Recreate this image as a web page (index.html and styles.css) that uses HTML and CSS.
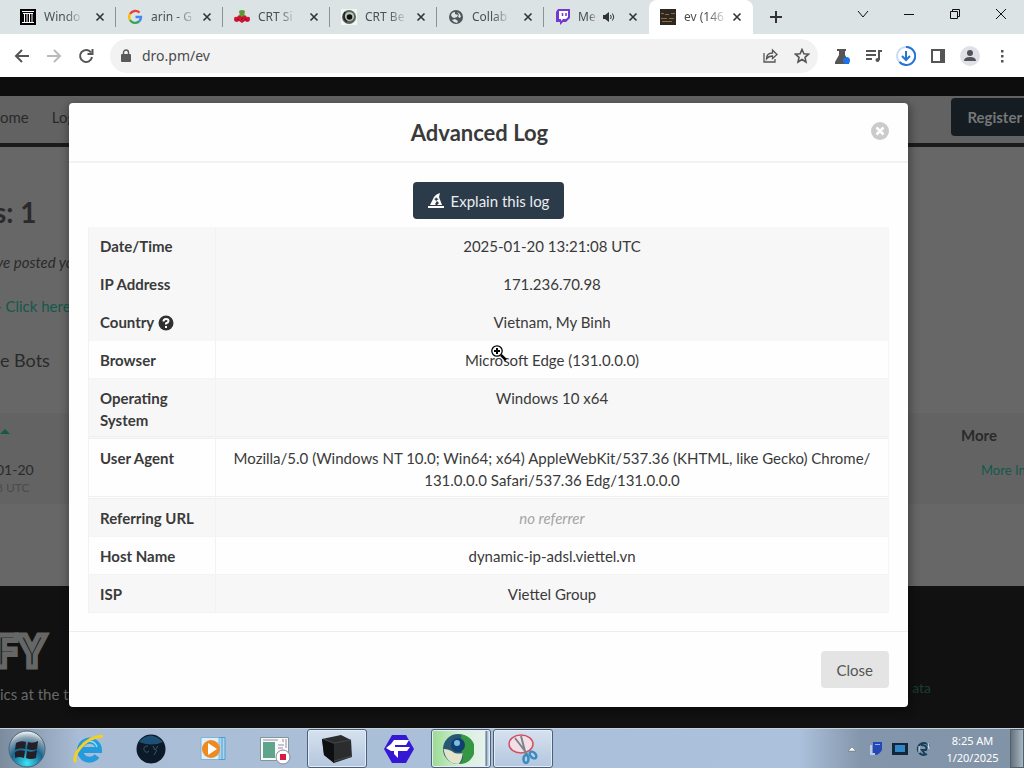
FILE: index.html
```html
<!DOCTYPE html>
<html lang="en">
<head>
<meta charset="utf-8">
<title>Advanced Log</title>
<link rel="stylesheet" href="styles.css">
</head>
<body>
<header class="tabbar">
  <div class="tab">
    <svg class="fav" viewBox="0 0 16 16"><path fill="#000" d="M0 0h16v16H0z"/><path stroke="#fff" d="M2 2.500h12M2 13.500h12M3 4.500h10M4.500 5v8M7 5v8M9.500 5v8M12 5v8"/></svg>
    <span class="tab-title"><span>Windo</span></span><button class="x" aria-label="Close tab"><svg viewBox="0 0 10 10"><path d="m1.500 1.500 7 7m0-7-7 7"/></svg></button>
  </div>
  <div class="tab">
    <svg class="fav" viewBox="0 0 16 16" fill="none" stroke-width="2.400"><path stroke="#e94235" d="M3 5a6 6 0 0 1 9.500-1.300"/><path stroke="#fbbc04" d="M3 11a6 6 0 0 1 0-6"/><path stroke="#34a853" d="M12 12.500A6 6 0 0 1 3 11"/><path stroke="#4285f4" d="M8.500 8H14a6 6 0 0 1-2 4.500"/></svg>
    <span class="tab-title"><span>arin - G</span></span><button class="x" aria-label="Close tab"><svg viewBox="0 0 10 10"><path d="m1.500 1.500 7 7m0-7-7 7"/></svg></button>
  </div>
  <div class="tab">
    <svg class="fav" viewBox="0 0 16 16"><path fill="#5b9b32" d="M5 2q3-2 6 0l-1 6H6z"/><path fill="#cf1236" d="M0 10q0-3 3-2l2-2 3 2 3-2 2 2q3-1 3 2t-3 3l-2-1-3 2-3-2-2 1q-3 0-3-3"/><path stroke="#711" d="m3 10 2 1m4-2-2 2m4-1 2 1"/></svg>
    <span class="tab-title"><span>CRT Si</span></span><button class="x" aria-label="Close tab"><svg viewBox="0 0 10 10"><path d="m1.500 1.500 7 7m0-7-7 7"/></svg></button>
  </div>
  <div class="tab">
    <svg class="fav" viewBox="0 0 16 16"><path fill="#f3f5f5" d="M0 0h16v16H0z"/><circle cx="8" cy="8" r="7" fill="#59635c"/><circle cx="8.500" cy="7.500" r="4.600" fill="#b8c5ba"/><circle cx="8.500" cy="8" r="2.800" fill="#111"/><path fill="none" stroke="#222" stroke-width="1.500" d="M4 3Q1 9 6 13"/></svg>
    <span class="tab-title"><span>CRT Be</span></span><button class="x" aria-label="Close tab"><svg viewBox="0 0 10 10"><path d="m1.500 1.500 7 7m0-7-7 7"/></svg></button>
  </div>
  <div class="tab">
    <svg class="fav" viewBox="0 0 16 16"><circle cx="8" cy="8" r="7" fill="#50575c"/><path fill="#dde3e5" d="M3 6q1-3 4-3v2l3 1-1 2-3 1-2-1zM9 3l3 2 1 3-2 1-1-2 1-1zM4 11l3-1 3 2-1 2q-3 0-5-3"/></svg>
    <span class="tab-title"><span>Collab</span></span><button class="x" aria-label="Close tab"><svg viewBox="0 0 10 10"><path d="m1.500 1.500 7 7m0-7-7 7"/></svg></button>
  </div>
  <div class="tab tab-last">
    <svg class="fav" viewBox="0 0 16 16"><path fill="#7139d4" d="M3 0h12v9l-4 4H8l-3 3v-3H1V3z"/><path fill="#fff" d="M4 2h9v6l-2 2H8l-2 2v-2H4z"/><path stroke="#7139d4" stroke-width="1.500" d="M7.500 4v3M11 4v3"/></svg>
    <span class="tab-title"><span>Me</span></span>
    <svg class="sound" viewBox="0 0 12 12"><path fill="#333" d="M0 4h2l4-3v10L2 8H0z"/><path fill="none" stroke="#333" d="M7.500 4q1.500 2 0 4M9.500 2.500q2.500 3.500 0 7"/></svg>
    <button class="x" aria-label="Close tab"><svg viewBox="0 0 10 10"><path d="m1.500 1.500 7 7m0-7-7 7"/></svg></button>
  </div>
  <div class="tab tab-active">
    <svg class="fav" viewBox="0 0 16 16"><path fill="#2f2820" d="M0 0h16v16H0z"/><path stroke="#8a6d3c" d="M1 4.500h3m1 1h4m2-1h4M1 9.500h6m2 0h5M2 12.500h10"/></svg>
    <span class="tab-title"><span>ev (146</span></span><button class="x" aria-label="Close tab"><svg viewBox="0 0 10 10"><path d="m1.500 1.500 7 7m0-7-7 7"/></svg></button>
  </div>
  <button class="newtab" aria-label="New tab"><svg viewBox="0 0 14 14"><path d="M7 1v12M1 7h12"/></svg></button>
  <div class="winctl">
    <button aria-label="Search tabs"><svg viewBox="0 0 12 12"><path d="m1 3 5 6 5-6"/></svg></button>
    <button aria-label="Minimize"><svg viewBox="0 0 12 12"><path d="M1 6.500h10"/></svg></button>
    <button aria-label="Restore"><svg viewBox="0 0 12 12"><path d="M1.500 3.500h7v7h-7zM3.500 3V1.500h7v7H9"/></svg></button>
    <button aria-label="Close"><svg viewBox="0 0 12 12"><path d="m1 1 10 10M11 1 1 11"/></svg></button>
  </div>
</header>

<nav class="toolbar" aria-label="Browser">
  <button class="tool" aria-label="Back"><svg viewBox="0 0 16 16"><path d="M15 8H2m6-6L2 8l6 6"/></svg></button>
  <button class="tool tool-off" aria-label="Forward"><svg viewBox="0 0 16 16"><path d="M1 8h13M8 2l6 6-6 6"/></svg></button>
  <button class="tool" aria-label="Reload"><svg viewBox="0 0 16 16"><path d="M13 4.500A6 6 0 1 0 14 9M14.500 1v5h-5"/></svg></button>
  <div class="omnibox">
    <svg class="lock" viewBox="0 0 10 14"><path fill="#5a5a5a" d="M1 5h8q1 0 1 1v6q0 1-1 1H1q-1 0-1-1V6q0-1 1-1"/><path fill="none" stroke="#5a5a5a" stroke-width="1.400" d="M2.500 5V3.500a2.500 2.500 0 0 1 5 0V5"/></svg>
    <input class="url" aria-label="Address" value="dro.pm/ev">
    <button class="tool thin" aria-label="Share"><svg viewBox="0 0 16 16"><path d="M2 5v9h11v-3M4.500 11q0-6 6-6V2l4.500 4.500-4.500 4V8q-4 0-6 3z"/></svg></button>
    <button class="tool thin star" aria-label="Bookmark"><svg viewBox="0 0 16 16"><path d="m8 1.500 1.900 4.300 4.600.4-3.500 3.100 1 4.700L8 11.500 4 14l1-4.700-3.500-3.100 4.600-.4z"/></svg></button>
  </div>
  <button class="tool" aria-label="Experiments"><svg viewBox="0 0 16 16"><path fill="#555" stroke="none" d="M3 1h9v2h-1v4l4 7v2H1v-2l4-7V3H3z"/><circle cx="12.500" cy="12.500" r="3.500" fill="#1a73e8" stroke="none"/></svg></button>
  <button class="tool" aria-label="Media controls"><svg viewBox="0 0 16 16"><path d="M0 3h10M0 7h10M0 11h6M13 12V3h3"/><circle cx="11.500" cy="12" r="2" fill="#555" stroke="none"/></svg></button>
  <button class="tool big" aria-label="Downloads"><svg viewBox="0 0 20 20"><circle cx="10" cy="10" r="9" stroke="#c6dcf5"/><path stroke="#2672d8" d="M10 1a9 9 0 1 1-6.500 15M10 5v9m-4-4 4 4 4-4"/></svg></button>
  <button class="tool" aria-label="Side panel"><svg viewBox="0 0 16 16"><path d="M2 2h12v12H2z"/><path fill="#555" stroke="none" d="M10 2h4v12h-4z"/></svg></button>
  <button class="tool big" aria-label="Profile"><svg viewBox="0 0 20 20"><circle cx="10" cy="10" r="10" fill="#dfe1e6" stroke="none"/><path fill="#50545a" stroke="none" d="M10 4a3 3 0 1 1 0 6 3 3 0 0 1 0-6m-6 11q0-4 6-4t6 4z"/></svg></button>
  <button class="tool" aria-label="Menu"><svg viewBox="0 0 16 16"><path fill="#555" stroke="none" d="M7 2h2.500v2.500H7zm0 5h2.500v2.500H7zm0 5h2.500v2.500H7z"/></svg></button>
</nav>

<main class="viewport">
  <div class="site">
    <div class="site-strip"></div>
    <nav class="site-nav" aria-label="Site">
      <a href="#">ome</a><a href="#">Log</a><a href="#" class="register">Register</a>
    </nav>
    <div class="site-body">
      <h1>s: 1</h1>
      <p class="posted">ve posted yo</p>
      <p class="click">- <a href="#">Click here</a></p>
      <p class="bots">e Bots</p>
      <div class="hits">
        <div class="hit-date"><span class="sort"></span><span class="date">01-20</span><span class="utc">8 UTC</span></div>
        <div class="hit-more"><b>More</b><a href="#">More In</a></div>
      </div>
    </div>
    <footer class="site-foot">
      <div class="brand"><span class="logo">FY</span><span>ics at the t</span></div>
      <a href="#">ata</a>
    </footer>
  </div>

  <div class="shade">
    <section class="dialog" role="dialog" aria-labelledby="dialog-title">
      <header class="dialog-head">
        <h2 id="dialog-title">Advanced Log</h2>
        <button class="dismiss" aria-label="Dismiss"><svg viewBox="0 0 18 18"><circle cx="9" cy="9" r="9" fill="#cbcbcb"/><path stroke="#fff" stroke-width="2.500" d="m5.500 5.500 7 7m0-7-7 7"/></svg></button>
      </header>
      <div class="dialog-body">
        <button class="explain"><svg viewBox="0 0 16 16"><path fill="#fff" d="M0 13h16v2H0zM2 12 6 4q2-3 6-4l-1 4 3 8H9l2-2-2-2-2 3 1 1z"/><path fill="#2c3b49" d="m8 4 1 1.500L11 6 9 7 8 8.500 7.500 7 6 6l1.500-.5z"/></svg>Explain this log</button>
        <table class="log">
          <tr class="alt soft"><th scope="row">Date/Time</th><td>2025-01-20 13:21:08 UTC</td></tr>
          <tr class="alt soft"><th scope="row">IP Address</th><td>171.236.70.98</td></tr>
          <tr class="alt soft"><th scope="row">Country <svg class="help" viewBox="0 0 16 16"><circle cx="8" cy="8" r="7.500" fill="#303030"/><path fill="none" stroke="#fff" stroke-width="2" d="M5.500 6.500q0-2.500 2.500-2.500t2.500 2Q10.500 7.500 8 8.500v1M8 11v2"/></svg></th><td>Vietnam, My Binh</td></tr>
          <tr><th scope="row">Browser</th><td>Microsoft Edge (131.0.0.0)</td></tr>
          <tr class="alt ruled"><th scope="row">Operating System</th><td>Windows 10 x64</td></tr>
          <tr class="ruled"><th scope="row">User Agent</th><td>Mozilla/5.0 (Windows NT 10.0; Win64; x64) AppleWebKit/537.36 (KHTML, like Gecko) Chrome/<wbr>131.0.0.0 Safari/537.36 Edg/131.0.0.0</td></tr>
          <tr class="alt"><th scope="row">Referring URL</th><td class="none">no referrer</td></tr>
          <tr><th scope="row">Host Name</th><td>dynamic-ip-adsl.viettel.vn</td></tr>
          <tr class="alt"><th scope="row">ISP</th><td>Viettel Group</td></tr>
        </table>
      </div>
      <footer class="dialog-foot"><button class="close">Close</button></footer>
    </section>
  </div>
  <svg class="cursor" viewBox="0 0 16 16"><path stroke="#000" stroke-width="2.500" d="m10 10 5 5"/><circle cx="6" cy="6" r="5.200" fill="#fff" stroke="#000" stroke-width="1.300"/><path stroke="#000" stroke-width="2" d="M6 3v6M3 6h6"/></svg>
</main>

<footer class="taskbar">
  <button class="start" aria-label="Start"><svg viewBox="0 0 38 38"><defs><radialGradient id="orb" cx=".5" cy=".9" r=".9"><stop offset="0" stop-color="#3ce4f7"/><stop offset=".5" stop-color="#17658e"/><stop offset=".8" stop-color="#8da5b4"/><stop offset="1" stop-color="#fff"/></radialGradient></defs><circle cx="19" cy="19" r="18" fill="url(#orb)" stroke="#486476"/><path fill="#241e26" d="M8 13q5-3 10-1l-1 7q-5-2-10 1zm12-1q5 2 10-1l-1 8q-5 2-10 0zM7 22q5-3 10-1l-1 7q-5-2-9 0zm12-1q5 2 10-1l-1 8q-5 2-10 0z"/></svg></button>
  <div class="apps">
    <button class="app" aria-label="Internet Explorer"><svg viewBox="0 0 32 32"><path fill="none" stroke="#249bdc" stroke-width="6" d="M8 17h18a9.500 9.500 0 1 0-2 6"/><path fill="none" stroke="#8adcff" stroke-width="1.500" d="M9 13a8 8 0 0 1 15 1"/><path fill="none" stroke="#f5cf24" stroke-width="3" d="M3 29C-2 25 10 4 30 3"/></svg></button>
    <button class="app" aria-label="Dark globe"><svg viewBox="0 0 32 32"><circle cx="16" cy="16" r="14.500" fill="#0b1929"/><path fill="#1d5075" d="M4 9Q15-4 28 9q-11 5-24 0"/><path fill="none" stroke="#3f5365" d="M13 13q-5 0-4 4 2 4 5 1m4-5 2 4 3-4m-4 9 3-5"/></svg></button>
    <button class="app" aria-label="Media Player"><svg viewBox="0 0 32 32"><path fill="#a9d7f1" stroke="#4f9cce" d="M12 4.500h16v22H12zM9 4.500h16v22H9z"/><path fill="#dceffa" stroke="#7eb5d8" d="M4 4.500h18v22H4z"/><circle cx="14" cy="16" r="9" fill="#ee8b20"/><path fill="#fff" d="m11 10 9 6-9 6z"/></svg></button>
    <button class="app" aria-label="Recorder"><svg viewBox="0 0 32 32"><path fill="#f8faf8" stroke="#7d9999" d="M1.500 4.500h28v23h-28z"/><path fill="#5fa58c" d="M4 9h12v16H4z"/><path stroke="#98a" d="M4 7h15m0 5h6m-6 3h5m3-9v9m-3-9v3"/><circle cx="24" cy="24" r="7" fill="#fff" stroke="#889"/><path fill="#d81c3f" d="M21 21h6v6h-6z"/></svg></button>
    <button class="app open" aria-label="Black box"><svg viewBox="0 0 32 32"><path fill="#2a2c2e" d="m1 6 19-4 10 5 1 17-18 6-10-8z"/><path fill="#0e0f10" d="m1 6 12 5v19L3 22z"/><path fill="none" stroke="#44484b" d="m2 6 11 4 17-3M13 28l18-5"/></svg></button>
    <button class="app" aria-label="F app"><svg viewBox="0 0 32 32"><path fill="#3518d4" d="M9 2h14l8 14-8 14H9L1 16z"/><path fill="#fff" d="M11 7h15l-3 5H12v2h15l-3 4h-9v7l-4-4v-3H8l-5-3 5-4z"/></svg></button>
    <button class="app open green" aria-label="Green globe"><svg viewBox="0 0 32 32"><circle cx="16" cy="16" r="15" fill="#285874"/><path fill="#359644" d="M19 1.500a14.500 14.500 0 0 1-2 29.500q6-5 3-11z"/><path fill="#e3e4ca" d="M1.500 16q6 0 11 4 5 1 8 0 0 7-4 11Q4 31 1.500 16"/><circle cx="16" cy="12" r="7" fill="#133e70"/><circle cx="15" cy="10" r="3" fill="#79bde4"/></svg></button>
    <button class="app open" aria-label="Snipping Tool"><svg viewBox="0 0 32 32"><ellipse cx="14" cy="11" rx="12" ry="9" fill="#f4dfe6" stroke="#d15164" stroke-width="1.500"/><path stroke="#79858c" stroke-width="2" d="m8 5 13 17M14 3l5 19"/><g fill="none" stroke="#388cc1" stroke-width="2.500"><ellipse cx="19" cy="26" rx="2.500" ry="4"/><ellipse cx="26" cy="22" rx="2.500" ry="4" transform="rotate(-45 26 22)"/></g></svg></button>
  </div>
  <div class="tray">
    <svg viewBox="0 0 16 16"><path fill="#fff" stroke="#566" stroke-width=".5" d="m4 10 4-4 4 4z"/></svg>
    <svg viewBox="0 0 16 16"><path fill="#2448b5" d="M5 1h9v8q-3 5-7 5H5z"/><path fill="#b9cbea" d="M2 4h2v8h3v2H2z"/><path stroke="#92b4ff" d="M7 3.500h5"/></svg>
    <svg viewBox="0 0 16 16"><path fill="#12263e" d="M0 2h16v12H0z"/><path fill="#3187c4" d="M3 4h10v7H3z"/></svg>
    <svg viewBox="0 0 16 16"><path fill="none" stroke="#183f5c" stroke-width="2" d="M13 5a6 6 0 1 0-2 8M5 4q7 0 5 5H6l3 4"/><path fill="none" stroke="#d7e8f4" d="M3 5v7m9-10 1 6"/></svg>
  </div>
  <time class="clock"><span>8:25 AM</span><span>1/20/2025</span></time>
  <button class="desk" aria-label="Show desktop"></button>
</footer>
</body>
</html>
```
FILE: styles.css
```css
* { box-sizing: border-box; }
body { margin: 0; height: 100vh; display: flex; flex-direction: column; overflow: hidden; font-family: Lato, "Open Sans", sans-serif; font-size: 15px; line-height: 22px; color: #3a3a3a; background: #0d0d0d; }
button { border: 0; padding: 0; background: none; font: inherit; color: inherit; display: flex; align-items: center; justify-content: center; }
h1, h2, p { margin: 0; }
svg { display: block; flex: none; }
a { color: inherit; text-decoration: none; }

/* tab strip */
.tabbar { flex: none; height: 34px; padding-left: 9px; display: flex; background: #dce3e5; font: 12px/16px "Noto Sans", "Open Sans", sans-serif; color: #4a4f52; }
.tab { flex: 0 1 107px; min-width: 0; display: flex; align-items: center; gap: 8px; padding: 0 11px; background: linear-gradient(#8d9395, #8d9395) right 7px / 1px 20px no-repeat; }
.tab-last { flex-basis: 105px; gap: 7px; background: none; }
.tab-active { flex-basis: 104px; background: #fff; border-radius: 8px 8px 0 0; }
.fav { width: 16px; height: 16px; }
.tab-title { flex: 1; min-width: 0; white-space: nowrap; }
.tab-title span { mask-image: linear-gradient(90deg, #000 60%, #0003); }
.sound { width: 12px; height: 12px; }
.tab-last .sound { margin-right: 6px; }
.x svg { width: 10px; height: 10px; stroke: #333; stroke-width: 1.6; }
.newtab { width: 40px; margin-left: 3px; }
.newtab svg { width: 14px; height: 14px; stroke: #333; stroke-width: 2; }
.winctl { margin-left: auto; display: flex; height: 28px; }
.winctl button { width: 46px; }
.winctl svg { width: 12px; height: 12px; fill: none; stroke: #111; }

/* address row */
.toolbar { flex: none; height: 43px; display: flex; align-items: center; padding: 0 6px; background: #fff; }
.tool { flex: none; width: 32px; height: 32px; }
.tool svg { width: 16px; height: 16px; fill: none; stroke: #555; stroke-width: 2; }
.tool-off svg { stroke: #bbb; }
.thin svg { stroke-width: 1.3; }
.star svg { stroke-width: 1.6; }
.big svg { width: 20px; height: 20px; }
.omnibox { flex: 1; height: 34px; margin: 0 8px; padding-left: 11px; display: flex; align-items: center; border-radius: 17px; background: #f2f2f2; }
.lock { width: 10px; height: 14px; }
.url { flex: 1; min-width: 0; margin: 0 0 0 11px; padding: 0; border: 0; background: none; font: 14px/20px "Noto Sans", "Open Sans", sans-serif; color: #4a4a4a; }

/* page behind the dialog */
.viewport { flex: 1; min-height: 0; position: relative; overflow: hidden; }
.site { height: 100%; display: flex; flex-direction: column; background: #676767; color: #2a2a2a; }
.site-strip { flex: none; height: 19px; background: #0d0d0d; }
.site-nav { flex: none; height: 51px; padding-bottom: 5px; display: flex; align-items: center; gap: 23px; border-bottom: 4px solid #1b1b1b; background: #626262; }
.register { margin-left: auto; margin-right: -14px; padding: 8px 16px; border-radius: 4px; background: #151d23; color: #777; font-weight: bold; }
.site-body { flex: none; }
h1 { margin: 47px 0 0 -6px; font-size: 28px; line-height: 36px; }
.posted { margin: 21px 0 0 -4px; font-style: italic; }
.click { margin: 22px 0 0 -4px; color: #12594a; }
.bots { margin-top: 32px; font-size: 18px; }
.hits { margin-top: 42px; height: 91px; display: flex; justify-content: space-between; background: #636363; }
.hit-date { margin-left: -4px; display: flex; flex-direction: column; align-items: flex-start; font-size: 14px; }
.sort { margin: 16px 0 20px 4px; border: 5px solid transparent; border-top: 0; border-bottom-color: #12594a; }
.date { line-height: 20px; margin-top: 6px; }
.utc { font-size: 12px; line-height: 16px; color: #4b4b4b; }
.hit-more { width: 63px; display: flex; flex-direction: column; gap: 13px; padding-top: 11px; }
.hit-more a { margin-left: 20px; white-space: nowrap; color: #12594a; font-size: 13px; }
.site-foot { margin-top: 82px; flex: 1; display: flex; justify-content: space-between; background: #111; color: #686868; padding: 40px 93px 0 0; }
.brand { display: flex; flex-direction: column; gap: 9px; white-space: nowrap; }
.logo { margin-left: -6px; font: bold 44px/48px "Open Sans", sans-serif; color: #142426; -webkit-text-stroke: 5px #666; }
.site-foot > a { padding-top: 51px; font-size: 14px; color: #173d34; }

/* dialog */
.shade { position: absolute; inset: 0; padding: 26px 116px 0 69px; }
.dialog { background: #fefefe; border-radius: 4px; box-shadow: 1px 3px 8px 2px #0005; }
.dialog-head { display: grid; grid-template-columns: 1fr 18px; align-items: center; height: 60px; padding: 0 19px; border-bottom: 2px solid #f2f2f2; }
h2 { padding-top: 2px; text-align: center; font-size: 22px; line-height: 30px; }
.dismiss { margin-bottom: 2px; }
.dismiss svg { width: 18px; height: 18px; }
.dialog-body { padding: 19px 19px 18px; display: flex; flex-direction: column; align-items: center; gap: 8px; }
.explain { height: 37px; padding: 0 15px; gap: 7px; border-radius: 4px; background: #2c3b49; color: #e9edf0; }
.explain svg { width: 16px; height: 16px; }
.log { width: 100%; border-collapse: separate; border-spacing: 0; border-left: 1px solid #f2f2f2; border-right: 1px solid #f6f6f6; }
.log th, .log td { padding: 8px 11px 7px; border-bottom: 1px solid #f4f4f4; vertical-align: top; text-align: center; }
.log th { width: 127px; text-align: left; border-right: 1px solid #f2f2f2; }
.alt { background: #f7f7f7; }
.log .soft > * { border-bottom-color: #f6f6f6; }
.log .ruled > * { padding-bottom: 5px; border-bottom: 3px double #efefef; }
.log .none { font-style: italic; color: #a5a5a5; }
.help { display: inline-block; width: 16px; height: 16px; vertical-align: -3px; }
.dialog-foot { display: flex; justify-content: flex-end; padding: 19px; border-top: 1px solid #eee; }
.close { height: 37px; padding: 0 16px; border-radius: 4px; background: #e4e4e4; color: #555; }
.cursor { position: absolute; left: 491px; top: 268px; width: 16px; height: 16px; }

/* taskbar */
.taskbar { flex: none; height: 40px; display: flex; border-top: 1px solid #c7d2dc; background: linear-gradient(90deg, #7c8c9f, #a9bdd6 80px, #acc1dc 78%, #8496ab 84%, #8193a7); }
.start { width: 54px; }
.start svg { width: 38px; height: 38px; }
.apps { flex: 1; display: flex; gap: 2px; margin-left: 5px; }
.app { width: 60px; border: 1px solid transparent; border-radius: 3px; }
.app svg { width: 32px; height: 32px; }
.open { border-color: #4d6079; background: linear-gradient(#d6e1ef, #b4c7de); box-shadow: inset 0 0 0 1px #e4edf7; }
.green { padding-right: 6px; background: linear-gradient(90deg, #9adb91, #d7f0d7 50%, #e5f1ef 53px, #58708a 54px, #c7d7e7 56px); }
.tray { display: flex; align-items: center; gap: 8px; }
.tray svg { width: 16px; height: 16px; }
.clock { width: 78px; padding-left: 3px; display: flex; flex-direction: column; align-items: center; justify-content: center; font: 11px/17px "Noto Sans", "Open Sans", sans-serif; color: #fff; }
.desk { width: 14px; border: 1px solid #52606d; background: linear-gradient(90deg, #66727d, #a9b7c4); }
```
